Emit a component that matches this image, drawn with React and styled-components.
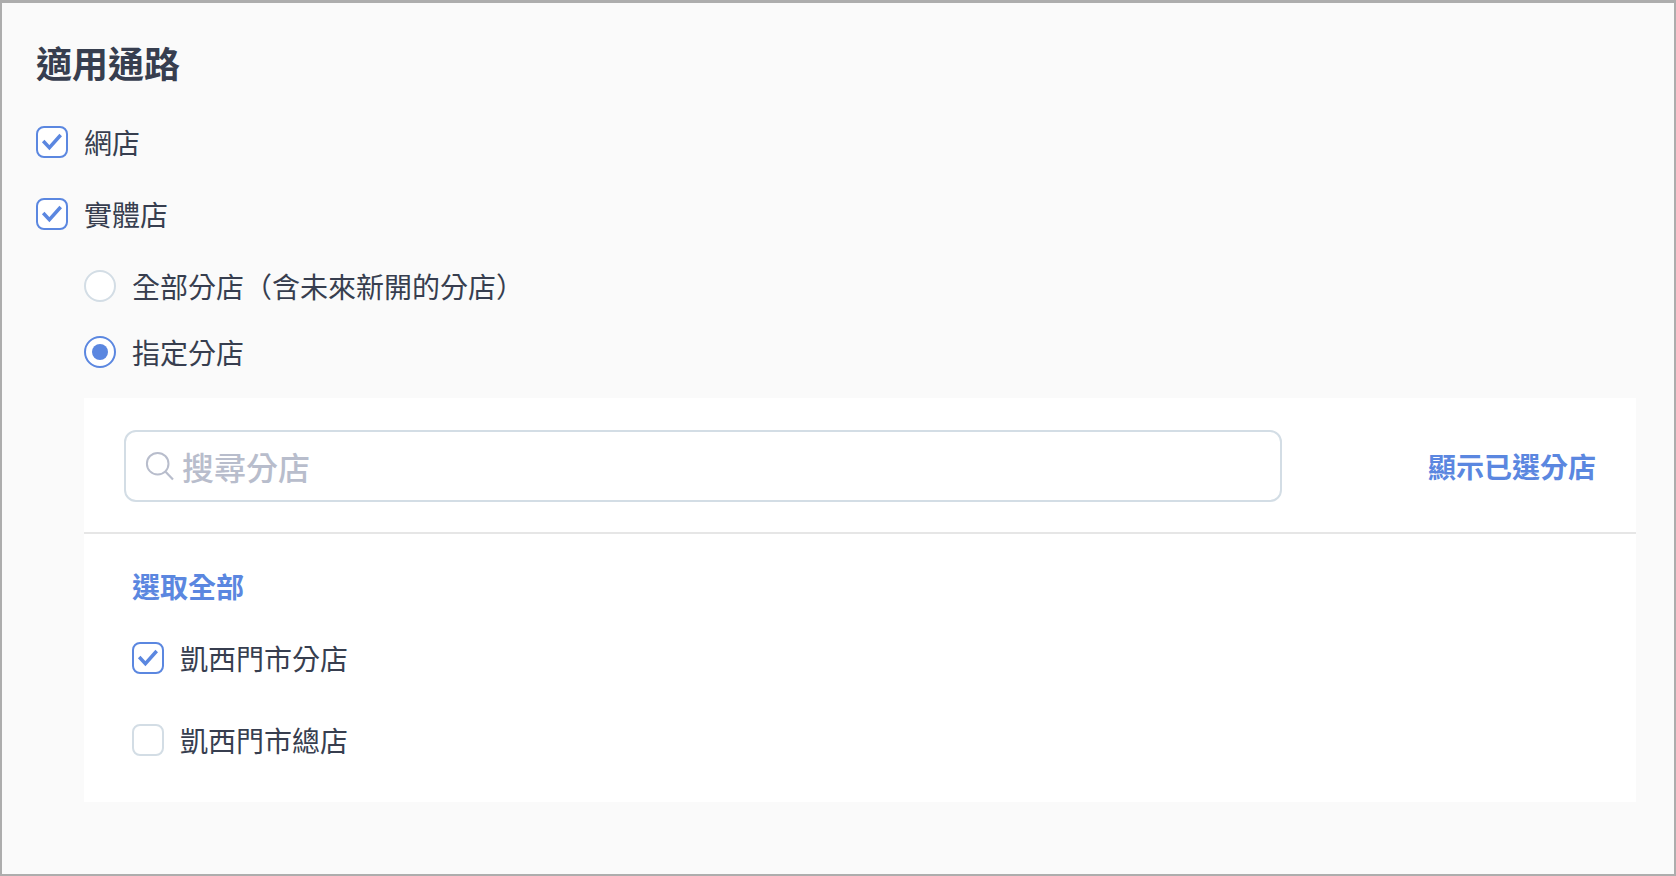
import React, { useState } from "react";
import styled, { createGlobalStyle } from "styled-components";

const GlobalStyle = createGlobalStyle`
  * {
    box-sizing: border-box;
  }

  body {
    margin: 0;
    color: #373e4f;
    font-family: "Noto Sans CJK TC", sans-serif;
    font-size: 28px;
    line-height: 40px;
  }

  button,
  input {
    font-family: inherit;
  }
`;

const Page = styled.main`
  min-height: 100vh;
  padding: 34px 38px 72px 34px;
  border: 2px solid #adadad;
  border-top-width: 3px;
  background-color: #fafafa;
`;

const Title = styled.h1`
  margin: 0 0 35px;
  font-size: 36px;
  font-weight: 700;
  line-height: 50px;
`;

const Options = styled.div`
  display: flex;
  flex-direction: column;
  align-items: flex-start;
  gap: ${(props) => props.$gap}px;
`;

const SubOptions = styled.div`
  margin: 32px 0 0 48px;
`;

const Option = styled.label`
  display: flex;
  align-items: center;
  gap: 16px;
  cursor: pointer;
`;

const Control = styled.span`
  display: grid;
  width: 32px;
  height: 32px;

  > * {
    grid-area: 1 / 1;
  }
`;

const ControlInput = styled.input`
  appearance: none;
  width: 32px;
  height: 32px;
  margin: 0;
  border: 2px solid #d3dde5;
  border-radius: ${(props) => (props.type === "radio" ? "50%" : "8px")};
  background-color: #fff;
  cursor: pointer;

  &:checked {
    border-color: #5b87e0;
  }

  & + svg {
    visibility: hidden;
    pointer-events: none;
  }

  &:checked + svg {
    visibility: visible;
  }
`;

const Panel = styled.section`
  margin-top: 26px;
  background-color: #fff;
`;

const PanelHeader = styled.div`
  display: flex;
  align-items: center;
  gap: 146px;
  padding: 32px 40px 30px;
  border-bottom: 2px solid #e6e6e6;
`;

const SearchBox = styled.label`
  display: flex;
  flex: 1;
  align-items: center;
  gap: 6px;
  height: 72px;
  padding: 0 18px;
  border: 2px solid #d3dde5;
  border-radius: 12px;
  color: #b8bdcc;
`;

const SearchInput = styled.input`
  flex: 1;
  min-width: 0;
  height: 48px;
  padding: 0;
  border: 0;
  outline: 0;
  background: transparent;
  color: #373e4f;
  font-size: 32px;
  font-weight: 500;

  &::placeholder {
    color: #b8bdcc;
    opacity: 1;
  }
`;

const TextButton = styled.button`
  padding: 0;
  border: 0;
  background: none;
  color: #5b87e0;
  font-size: 28px;
  font-weight: 700;
  line-height: 40px;
  white-space: nowrap;
  cursor: pointer;
`;

const PanelBody = styled.div`
  padding: 32px 48px 42px;
`;

const Stores = styled.div`
  margin-top: 32px;
`;

const CheckOption = ({ label, defaultChecked }) => (
  <Option>
    <Control>
      <ControlInput type="checkbox" defaultChecked={defaultChecked} />
      <svg width="32" height="32" viewBox="0 0 32 32" fill="none">
        <path d="M7.2 15L13.4 21.6L24.7 9" stroke="#5b87e0" strokeWidth="3.5" />
      </svg>
    </Control>
    {label}
  </Option>
);

const RadioOption = ({ label, value, selected, onSelect }) => (
  <Option>
    <Control>
      <ControlInput
        type="radio"
        name="scope"
        value={value}
        checked={selected === value}
        onChange={() => onSelect(value)}
      />
      <svg width="32" height="32" viewBox="0 0 32 32">
        <circle cx="16" cy="16" r="8" fill="#5b87e0" />
      </svg>
    </Control>
    {label}
  </Option>
);

const App = () => {
  const [scope, setScope] = useState("specific");

  return (
    <>
      <GlobalStyle />
      <Page>
        <Title>適用通路</Title>
        <Options $gap={32}>
          <CheckOption label="網店" defaultChecked />
          <CheckOption label="實體店" defaultChecked />
        </Options>
        <SubOptions>
          <Options $gap={26}>
            <RadioOption
              label="全部分店（含未來新開的分店）"
              value="all"
              selected={scope}
              onSelect={setScope}
            />
            <RadioOption
              label="指定分店"
              value="specific"
              selected={scope}
              onSelect={setScope}
            />
          </Options>
          <Panel>
            <PanelHeader>
              <SearchBox>
                <svg width="32" height="32" viewBox="0 0 32 32" fill="none">
                  <circle cx="13.7" cy="13.7" r="10.8" stroke="currentColor" strokeWidth="2" />
                  <path d="M21.3 21.5L29 29.5" stroke="currentColor" strokeWidth="2.2" />
                </svg>
                <SearchInput type="text" placeholder="搜尋分店" aria-label="搜尋分店" />
              </SearchBox>
              <TextButton type="button">顯示已選分店</TextButton>
            </PanelHeader>
            <PanelBody>
              <TextButton type="button">選取全部</TextButton>
              <Stores>
                <Options $gap={42}>
                  <CheckOption label="凱西門市分店" defaultChecked />
                  <CheckOption label="凱西門市總店" />
                </Options>
              </Stores>
            </PanelBody>
          </Panel>
        </SubOptions>
      </Page>
    </>
  );
};

export default App;
